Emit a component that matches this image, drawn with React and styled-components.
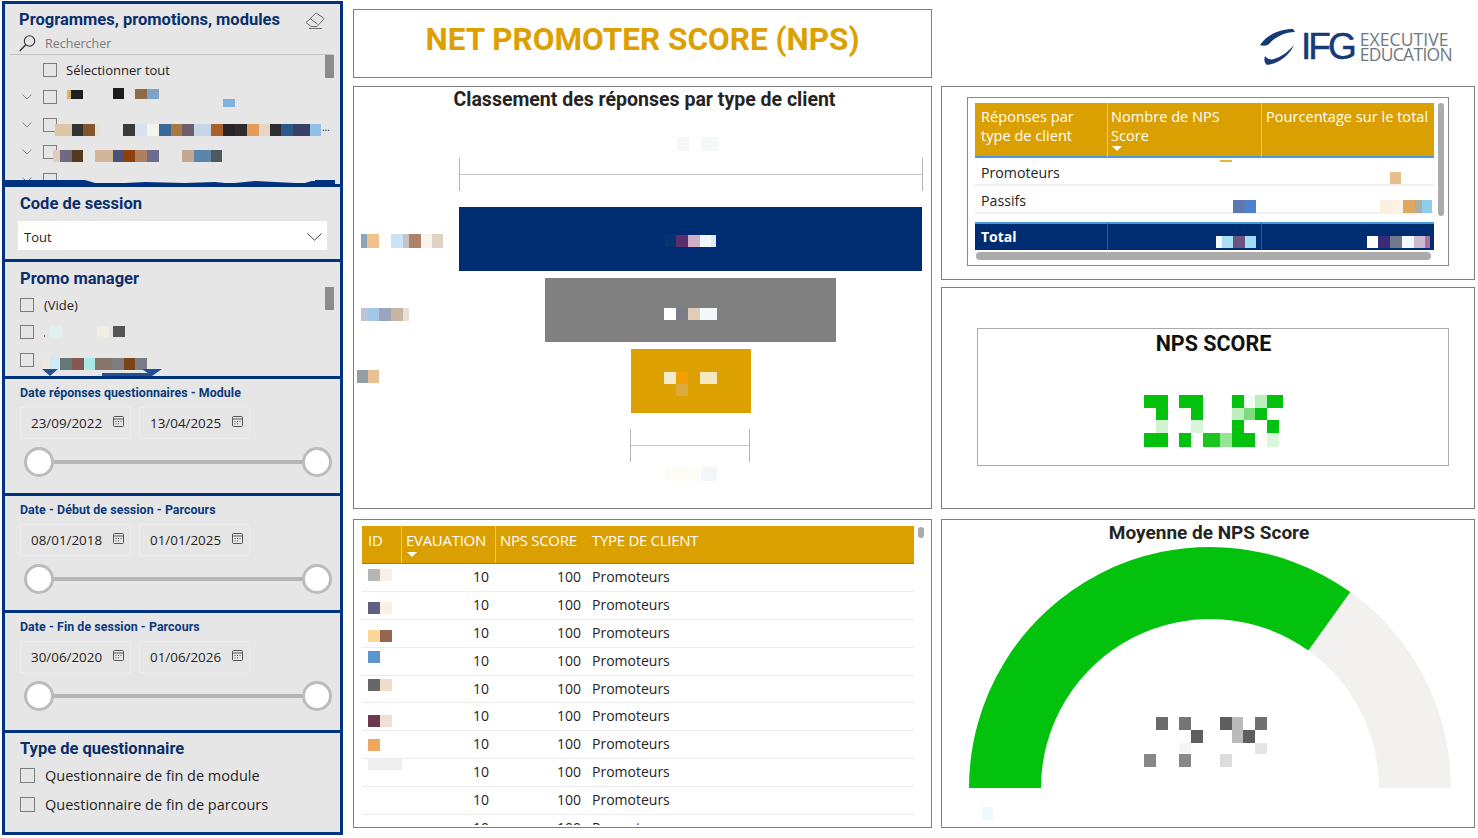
import React from "react";
import styled, { createGlobalStyle } from "styled-components";

const NAVY = "#002d72";
const GOLD = "#da9f00";
const BODY = `"Open Sans", "Noto Sans", sans-serif`;
const DIN = `Roboto, "Liberation Sans", sans-serif`;

const Global = createGlobalStyle`
    html, body { margin:0; padding:0; background:#fff; }
    body { width:1478px; height:838px; overflow:hidden; font-family:${BODY}; color:#252423; }
`;

const Page = styled.div`
    display:grid;
    grid-template-columns:344px 579px 534px;
    column-gap:9px;
    width:1478px;
    height:838px;
`;
const Sidebar = styled.aside`
    display:flex;
    flex-direction:column;
    padding:1px 1px 0 2px;
`;
const Panel = styled.section`
    position:relative;
    box-sizing:border-box;
    height:${p => p.$h}px;
    padding:${p => p.$pad || "0 0 0 15px"};
    background:#e6e6e6;
    border:3px solid #00337f;
    border-bottom:${p => p.$last ? "3px solid #00337f" : "0"};
    overflow:hidden;
`;
const SlicerTitle = styled.h3`
    margin:0;
    font:700 16.5px/22px ${DIN};
    color:#0a2f6b;
`;
const SmallTitle = styled.h4`
    margin:0;
    font:700 12.4px/16px ${DIN};
    letter-spacing:0.06px;
    color:#0a3a7c;
`;
const HeadRow = styled.div`
    display:flex;
    align-items:center;
    justify-content:space-between;
    height:31px;
    padding:1px 15px 0 0;
    box-sizing:border-box;
`;
const SearchRow = styled.div`
    display:flex;
    align-items:center;
    gap:9px;
    height:20px;
    margin-left:-9px;
    padding:0 0 2px 9px;
    width:323px;
    box-sizing:border-box;
    border-bottom:1px solid #c4c4c4;
    font-size:12.5px;
    color:#7a7a7a;
`;
const List = styled.div`
    display:flex;
    flex-direction:column;
    height:${p => p.$h}px;
    overflow:hidden;
    margin-top:${p => p.$mt || 0}px;
`;
const Item = styled.div`
    display:flex;
    align-items:center;
    flex:none;
    height:${p => p.$h || 27.5}px;
    font-size:${p => p.$fs || 13}px;
    color:#252423;
    gap:${p => p.$gap ?? 9}px;
`;
const Box = styled.span`
    flex:none;
    box-sizing:border-box;
    width:${p => p.$size || 14}px;
    height:${p => p.$size || 14}px;
    margin-left:${p => p.$ml || 0}px;
    border:1px solid #7d7d7d;
`;
const Caret = styled.svg`
    flex:none;
    width:10px;
    height:6px;
    margin-left:3px;
    margin-right:11px;
    fill:none;
    stroke:#8a8a8a;
    stroke-width:1;
`;
const Blot = styled.span`
    display:block;
    margin-left:${p => p.$ml || 0}px;
    margin-top:${p => p.$mt || 0}px;
`;
const Ellipsis = styled.span`
    font-size:10px;
    margin-top:4px;
    margin-left:1px;
`;
const ScrollThumb = styled.span`
    position:absolute;
    top:${p => p.$top}px;
    right:${p => p.$right}px;
    width:9px;
    height:23px;
    background:#8c8c8c;
`;
const Dropdown = styled.div`
    display:flex;
    align-items:center;
    justify-content:space-between;
    box-sizing:border-box;
    width:309px;
    height:29px;
    margin:6px 0 0 -2px;
    padding:2px 5px 0 6px;
    background:#fff;
    font-size:13px;
`;
const DateRow = styled.div`
    display:flex;
    gap:8px;
    margin-top:6px;
`;
const DateBox = styled.div`
    display:flex;
    align-items:center;
    box-sizing:border-box;
    width:111px;
    height:32px;
    padding:0 6px 0 10px;
    justify-content:space-between;
    border:1px solid #ececec;
    font-size:13.4px;
    color:#252423;
`;
const Slider = styled.div`
    position:relative;
    display:flex;
    justify-content:space-between;
    align-items:center;
    width:308px;
    height:30px;
    margin:8px 0 0 4px;
    &::before {
        content:"";
        position:absolute;
        left:10px;
        right:10px;
        top:13px;
        height:4px;
        background:#b5b5b5;
    }
`;
const Thumb = styled.span`
    position:relative;
    box-sizing:border-box;
    width:30px;
    height:30px;
    border-radius:50%;
    background:#fff;
    border:3px solid #bcbcbc;
`;
const Column = styled.div`
    display:flex;
    flex-direction:column;
    padding-top:${p => p.$top || 0}px;
`;
const Card = styled.div`
    position:relative;
    box-sizing:border-box;
    flex:none;
    height:${p => p.$h}px;
    margin-bottom:${p => p.$mb || 0}px;
    border:1px solid #7f7f7f;
    background:#fff;
`;
const BigTitle = styled.h1`
    margin:0;
    height:100%;
    box-sizing:border-box;
    padding-bottom:8px;
    display:flex;
    align-items:center;
    justify-content:center;
    font:700 31.5px ${DIN};
    color:#dca000;
`;
const CardTitle = styled.h2`
    margin:${p => p.$mt || 0}px 0 0;
    text-align:center;
    font:700 ${p => p.$fs || 19}px/${p => p.$lh || 24}px ${DIN};
    color:${p => p.$c || "#252423"};
    padding-left:${p => p.$pl || 0}px;
`;
const FunnelWrap = styled.div`
    display:flex;
    flex-direction:column;
    padding-top:${p => p.$top || 0}px;
`;
const FaintRow = styled.div`
    margin-left:${p => p.$ml}px;
    margin-top:${p => p.$mt || 0}px;
    height:${p => p.$h}px;
`;
const Bracket = styled.div`
    box-sizing:border-box;
    width:${p => p.$w}px;
    height:33px;
    margin-left:${p => p.$ml}px;
    margin-top:${p => p.$mt || 0}px;
    margin-bottom:${p => p.$mb || 0}px;
    border:solid #b4b4b4;
    border-width:0 1px;
    background:linear-gradient(#c6c6c6,#c6c6c6) center / 100% 1px no-repeat;
`;
const FunnelRow = styled.div`
    display:flex;
    height:64px;
    margin-bottom:7px;
`;
const FunnelLabel = styled.div`
    flex:none;
    width:105px;
    padding:${p => p.$top}px 0 0 ${p => p.$left}px;
    box-sizing:border-box;
`;
const Track = styled.div`
    display:flex;
    justify-content:center;
    width:463px;
`;
const Bar = styled.div`
    display:flex;
    align-items:center;
    justify-content:center;
    box-sizing:border-box;
    padding-top:${p => p.$pt || 0}px;
    width:${p => p.$w}px;
    background:${p => p.$c};
`;
const Logo = styled.div`
    display:flex;
    align-items:center;
    justify-content:flex-end;
    height:86px;
    padding:8px 23px 0 0;
    box-sizing:border-box;
`;
const LogoName = styled.span`
    margin:0 6px 0 5px;
    font:400 37px/38px "Liberation Sans", sans-serif;
    letter-spacing:-3px;
    -webkit-text-stroke:0.5px #163a75;
    color:#163a75;
`;
const LogoTag = styled.span`
    display:flex;
    flex-direction:column;
    font:400 17.5px/15px ${BODY};
    color:#6f7880;
`;
const LogoLine = styled.span`
    letter-spacing:${p => p.$ls}px;
`;
const InnerCard = styled.div`
    position:relative;
    box-sizing:border-box;
    width:${p => p.$w}px;
    height:${p => p.$h}px;
    margin:${p => p.$m};
    border:1px solid ${p => p.$bc || "#8a8a8a"};
    padding:${p => p.$pad || 0};
`;
const SummaryGrid = styled.div`
    position:relative;
    display:grid;
    grid-template-columns:132px 154px 173px;
    grid-template-rows:55px 28px 28px 8px 28px;
    width:459px;
`;
const HeadCell = styled.div`
    position:relative;
    box-sizing:border-box;
    padding:4px ${p => p.$pr ?? 4}px 0 ${p => p.$pl || 6}px;
    background:${GOLD};
    color:#fff;
    font-size:14.6px;
    line-height:19px;
    border-left:${p => p.$line ? "1px solid #edc766" : "0"};
    border-bottom:2px solid #4a98d8;
`;
const SortMark = styled.span`
    position:absolute;
    left:${p => p.$l}px;
    bottom:${p => p.$b}px;
    width:0;
    height:0;
    border:solid transparent;
    border-width:5px 5px 0;
    border-top-color:#fff;
`;
const BodyCell = styled.div`
    display:flex;
    align-items:center;
    box-sizing:border-box;
    justify-content:${p => p.$end ? "flex-end" : "flex-start"};
    padding:${p => p.$pt || 0}px ${p => p.$pr || 0}px 0 ${p => p.$pl || 0}px;
    font-size:14.2px;
    border-bottom:2px solid #f0f0f0;
`;
const TotalCell = styled.div`
    display:flex;
    align-items:center;
    box-sizing:border-box;
    justify-content:${p => p.$end ? "flex-end" : "flex-start"};
    padding:${p => p.$pt || 0}px ${p => p.$pr || 0}px ${p => p.$pb || 0}px ${p => p.$pl || 0}px;
    background:${NAVY};
    color:#fff;
    font-size:14px;
    font-weight:700;
    border-top:2px solid #4a98d8;
    border-left:${p => p.$line ? "1px solid #34588f" : "0"};
`;
const Spacer = styled.div`
    grid-column:1 / -1;
`;
const GoldTick = styled.span`
    position:absolute;
    left:245px;
    top:57px;
    width:12px;
    height:2px;
    background:#e5b53a;
`;
const VScroll = styled.span`
    position:absolute;
    top:5px;
    left:470px;
    width:6px;
    height:113px;
    border-radius:3px;
    background:#ababab;
`;
const HScroll = styled.span`
    display:block;
    width:455px;
    height:8px;
    margin:2px 0 0 1px;
    border-radius:4px;
    background:#ababab;
`;
const ScoreValue = styled.div`
    display:flex;
    justify-content:center;
    margin:37px 0 0 2px;
`;
const GaugeSvg = styled.svg`
    display:block;
    margin:1px 0 0 0;
`;
const ClientTable = styled.div`
    margin:6px 0 0 8px;
    width:552px;
`;
const ClientHead = styled.div`
    display:grid;
    grid-template-columns:39px 94px 97px 1fr;
    height:37px;
    background:${GOLD};
    border-bottom:1px solid #3b8fd0;
    color:#fff;
    font-size:15px;
    letter-spacing:-0.3px;
    line-height:29px;
`;
const ClientHeadCell = styled.div`
    position:relative;
    padding-left:${p => p.$pl ?? 4}px;
    border-left:${p => p.$line ? "1px solid #edc766" : "0"};
`;
const ClientRows = styled.div`
    height:261px;
    overflow:hidden;
`;
const ClientRow = styled.div`
    display:grid;
    grid-template-columns:39px 88px 92px 1fr;
    box-sizing:border-box;
    height:27.9px;
    padding-bottom:2px;
    align-items:center;
    border-bottom:1px solid #ececec;
    font-size:14px;
`;
const IdCell = styled.div`
    padding-left:6px;
`;
const Num = styled.div`
    text-align:right;
`;
const ClientType = styled.div`
    padding-left:11px;
`;
const SmallScroll = styled.span`
    position:absolute;
    top:7px;
    left:564px;
    width:6px;
    height:11px;
    border-radius:3px;
    background:#ababab;
`;

// flou de confidentialité : blocs de couleur
const Pixels = ({ w, h, cells }) => (
    <svg width={w} height={h} viewBox={`0 0 ${w} ${h}`} style={{ display: "block", flex: "none", overflow: "visible" }}>
        {cells.map(([x, y, cw, ch, c], i) => <rect key={i} x={x} y={y} width={cw} height={ch} fill={c} />)}
    </svg>
);
const strip = (segs, h = 12, y = 0) => {
    let x = 0;
    const cells = [];
    segs.forEach(([sw, c]) => {
        if (c) cells.push([x, y, sw, h, c]);
        x += sw;
    });
    return cells;
};
const stripW = segs => segs.reduce((a, s) => a + s[0], 0);
const Strip = ({ segs, h = 12 }) => <Pixels w={stripW(segs)} h={h} cells={strip(segs, h)} />;

const Chevron = () => (
    <Caret viewBox="0 0 10 6"><path d="M.5.5 5 5 9.5.5" /></Caret>
);
const Eraser = () => (
    <svg width="20" height="17" viewBox="0 0 20 17" fill="none" stroke="#6e6e6e" strokeWidth="1">
        <path d="M1 10.5 10.5 1.5a1 1 0 0 1 1.4 0L18.5 6a1 1 0 0 1 0 1.4L12 14.5H6z" />
        <path d="M5 6.5 12.5 12M4 16.5h13" />
    </svg>
);
const SearchIcon = () => (
    <svg width="17" height="17" viewBox="0 0 17 17" fill="none" stroke="#333" strokeWidth="1.1">
        <circle cx="10.5" cy="6" r="5.2" />
        <path d="M6.8 9.8 .7 16" strokeWidth="1.4" />
    </svg>
);
const Calendar = () => (
    <svg width="11" height="11" viewBox="0 0 11 11" fill="none" stroke="#555" style={{ marginTop: -3 }}>
        <rect x=".5" y=".5" width="10" height="10" rx="1" />
        <path d="M.5 3h10" />
        <path d="M2.5 5.5h1M5 5.5h1M7.5 5.5h1M2.5 7.8h1M5 7.8h1" strokeWidth="1" />
    </svg>
);
const DropChevron = () => (
    <svg width="15" height="8" viewBox="0 0 15 8" fill="none" stroke="#444"><path d="M.5.5 7.5 7.2 14.5.5" /></svg>
);
const Swoosh = () => (
    <svg width="36" height="38" viewBox="0 0 36 38" fill="#163a75">
        <path d="M0 17C6 8 18 1 33 1L35 4C25 4 15 9 9 16 7 18 3 18 0 17Z" />
        <path d="M34 17C29 28 18 36 7 37 4 35 4 31 5 28 7 31 11 32 14 31 21 29 28 24 34 17Z" />
    </svg>
);

const row3 = [[17, "#dcc8a8"], [11, "#333333"], [12, "#84562a"], [5, "#e9e0d4"], [23, null], [12, "#3a3a3a"], [12, "#d6e1ee"], [12, "#f4f4ef"], [12, "#3a6a9c"], [11, "#a9783f"], [12, "#6e5e6a"], [17, "#c5d6e8"], [12, "#a9602a"], [12, "#2c2328"], [12, "#2e2c2e"], [12, "#e49d58"], [11, "#e6d5c2"], [11, "#2e2e30"], [12, "#2a5a8c"], [17, "#3a3f66"], [11, "#90bfe8"]];
const row4 = [[7, "#e0cdb8"], [12, "#6f6a80"], [11, "#54391f"], [12, null], [18, "#d3b59a"], [11, "#4a5078"], [11, "#8e3f0a"], [12, "#ab8160"], [12, "#6d6b8f"], [23, null], [12, "#c3a78f"], [17, "#5c85ad"], [11, "#4c5a5e"]];

const ClientIds = [
    [[12, "#b5b5b5"], [12, "#f8efe6"]],
    [[12, "#5f5f85"], [12, "#fdf0e3"]],
    [[12, "#fcd79a"], [12, "#96654f"]],
    [[12, "#5b95cc"]],
    [[12, "#666666"], [12, "#f0dcc8"]],
    [[12, "#6b3a4f"], [12, "#eee0d5"]],
    [[12, "#eda860"]],
    [[34, "#eeeeee"]],
    [],
    [],
];
const IdOffset = [-1, 4, 4, -3, -3, 5, 1, -8, 0, 0];

const green = "#02c20e";
const ScoreCells = [
    [0, 0, 24, 13, green], [35, 0, 24, 13, green], [88, 0, 12, 13, green], [100, 0, 11, 13, "#f4fdf4"], [111, 0, 12, 13, "#bdeebd"], [123, 0, 16, 13, green],
    [12, 13, 12, 12, green], [35, 13, 11, 12, "#f8fef8"], [47, 13, 12, 12, green], [88, 13, 12, 12, "#bdeebd"], [100, 13, 11, 12, "#7cdc7c"], [111, 13, 12, 12, green],
    [12, 25, 12, 13, "#d2f3d2"], [47, 25, 12, 13, "#d9f5d9"], [88, 25, 12, 13, green], [123, 25, 12, 13, green],
    [0, 38, 24, 14, green], [35, 38, 12, 14, green], [59, 38, 17, 14, "#1cc41c"], [76, 38, 12, 14, "#94e494"], [88, 38, 23, 14, green], [123, 38, 12, 14, "#dcf6dc"],
];
const GaugeCells = [
    [12, 0, 12, 13, "#6b6b6b"], [35, 0, 12, 13, "#757575"], [47, 13, 12, 13, "#5e5e5e"], [76, 0, 12, 13, "#5e5e5e"], [88, 0, 11, 26, "#bbbbbb"], [99, 13, 12, 13, "#5e5e5e"], [111, 0, 12, 13, "#707070"],
    [111, 26, 12, 11, "#e5e5e5"], [35, 26, 12, 11, "#f6f6f6"], [0, 37, 12, 13, "#888888"], [35, 37, 12, 13, "#888888"], [76, 37, 12, 13, "#dddddd"],
];

// arc de jauge, angle en degrés depuis la droite
const polar = (cx, cy, r, a) => [cx + r * Math.cos(a * Math.PI / 180), cy - r * Math.sin(a * Math.PI / 180)];
const arcPath = (cx, cy, R, r, from, to) => {
    const [x1, y1] = polar(cx, cy, R, from);
    const [x2, y2] = polar(cx, cy, R, to);
    const [x3, y3] = polar(cx, cy, r, to);
    const [x4, y4] = polar(cx, cy, r, from);
    return `M${x1} ${y1}A${R} ${R} 0 0 1 ${x2} ${y2}L${x3} ${y3}A${r} ${r} 0 0 0 ${x4} ${y4}Z`;
};

const DateSlicer = ({ title, from, to, h }) => (
    <Panel $h={h} $pad="6px 0 0 15px">
        <SmallTitle>{title}</SmallTitle>
        <DateRow>
            <DateBox>{from}<Calendar /></DateBox>
            <DateBox>{to}<Calendar /></DateBox>
        </DateRow>
        <Slider><Thumb /><Thumb /></Slider>
    </Panel>
);

export default function App() {
    return (
        <>
            <Global />
            <Page>
                <Sidebar>
                    <Panel $h={183} $pad="0 0 0 14px">
                        <HeadRow>
                            <SlicerTitle>Programmes, promotions, modules</SlicerTitle>
                            <Eraser />
                        </HeadRow>
                        <SearchRow><SearchIcon />Rechercher</SearchRow>
                        <ScrollThumb $top={51} $right={6} />
                        <List $h={131} $mt={1}>
                            <Item><Box $ml={24} />Sélectionner tout</Item>
                            <Item $gap={0}>
                                <Chevron /><Box />
                                <Blot $ml={10}>
                                    <Pixels w={170} h={18} cells={[[0, 2, 4, 9, "#d8b070"], [4, 2, 12, 9, "#1f1f1f"], [46, 0, 11, 11, "#1c1c1c"], [68, 1, 12, 10, "#8f6c47"], [80, 1, 12, 10, "#7ea3c8"], [156, 11, 12, 8, "#7db1de"]]} />
                                </Blot>
                            </Item>
                            <Item $gap={0}>
                                <Chevron /><Box />
                                <Blot $ml={-2} $mt={10}><Strip segs={row3} /></Blot>
                                <Ellipsis>…</Ellipsis>
                            </Item>
                            <Item $gap={0}>
                                <Chevron /><Box />
                                <Blot $ml={-4} $mt={8}><Strip segs={row4} /></Blot>
                            </Item>
                            <Item $gap={0}><Chevron /><Box /></Item>
                        </List>
                        <svg width="330" height="5" viewBox="0 0 330 5" style={{ position: "absolute", left: 0, bottom: 0 }}>
                            <path d="M0 1h80l10 3h30l20-1 40 1 30-1 10 1h10l20-2 40 2h10l10-3h30v4H0z" fill="#00337f" />
                            <path d="M80 0h10l8 3h28l14-1h40l30 0h20l20 0h30l30 0v-2z" fill="#e6e6e6" />
                        </svg>
                    </Panel>
                    <Panel $h={75} $pad="6px 0 0 15px">
                        <SlicerTitle>Code de session</SlicerTitle>
                        <Dropdown>Tout<DropChevron /></Dropdown>
                    </Panel>
                    <Panel $h={117} $pad="6px 0 0 15px">
                        <SlicerTitle>Promo manager</SlicerTitle>
                        <ScrollThumb $top={25} $right={6} />
                        <List $h={84} $mt={1}>
                            <Item $gap={10}><Box />(Vide)</Item>
                            <Item $gap={0}>
                                <Box />
                                <Blot $ml={10}>
                                    <Pixels w={85} h={14} cells={[[0, 10, 1, 2, "#a07050"], [6, 0, 12, 13, "#dff0f0"], [53, 1, 12, 11, "#f0eee2"], [69, 1, 12, 11, "#555555"]]} />
                                </Blot>
                            </Item>
                            <Item $gap={0}>
                                <Box />
                                <Blot $ml={8} $mt={8}>
                                    <Strip segs={[[8, "#f0e8d8"], [10, "#cfeaf0"], [12, "#64787a"], [12, "#84584e"], [11, "#a8e8e8"], [17, "#857467"], [12, "#7e7e7e"], [11, "#7c4414"], [12, "#767c88"]]} />
                                </Blot>
                            </Item>
                        </List>
                        <svg width="125" height="7" viewBox="0 0 125 7" style={{ position: "absolute", left: 37, bottom: 0 }}>
                            <path d="M0 0h16l-8 7zM100 0h20l-10 7z" fill="#234f8e" />
                            <path d="M60 4h50v3H60z" fill="#234f8e" />
                        </svg>
                    </Panel>
                    <DateSlicer h={117} title="Date réponses questionnaires - Module" from="23/09/2022" to="13/04/2025" />
                    <DateSlicer h={117} title="Date - Début de session - Parcours" from="08/01/2018" to="01/01/2025" />
                    <DateSlicer h={120} title="Date - Fin de session - Parcours" from="30/06/2020" to="01/06/2026" />
                    <Panel $h={105} $last $pad="5px 0 0 15px">
                        <SlicerTitle>Type de questionnaire</SlicerTitle>
                        <List $h={60} $mt={1}>
                            <Item $h={29} $fs={14.5} $gap={10}><Box $size={15} />Questionnaire de fin de module</Item>
                            <Item $h={29} $fs={14.5} $gap={10}><Box $size={15} />Questionnaire de fin de parcours</Item>
                        </List>
                    </Panel>
                </Sidebar>

                <Column $top={9}>
                    <Card $h={69} $mb={8}><BigTitle>NET PROMOTER SCORE (NPS)</BigTitle></Card>
                    <Card $h={423} $mb={10}>
                        <CardTitle $fs={19.5} $pl={4} $mt={1}>Classement des réponses par type de client</CardTitle>
                        <FunnelWrap $top={25}>
                            <FaintRow $ml={323} $h={21}><Pixels w={44} h={14} cells={[[0, 0, 12, 14, "#f9f7f5"], [24, 0, 18, 14, "#f5f9f9"]]} /></FaintRow>
                            <Bracket $w={464} $ml={105} $mb={16} />
                            <FunnelRow>
                                <FunnelLabel $top={27} $left={7}><Strip segs={[[6, "#8fa3b3"], [12, "#f3c18c"], [12, null], [12, "#cbe3f5"], [6, "#c4c4c4"], [12, "#ad8268"], [11, "#fbf3ed"], [11, "#ded3c3"]]} h={14} /></FunnelLabel>
                                <Track><Bar $w={463} $c="#002d72" $pt={4}><Strip segs={[[11, "#06326f"], [12, "#5a2d6e"], [12, "#d0b0c8"], [11, "#eef8fb"], [5, "#dfeaf2"]]} /></Bar></Track>
                            </FunnelRow>
                            <FunnelRow>
                                <FunnelLabel $top={30} $left={7}><Strip segs={[[7, "#b9c6d3"], [11, "#a3c5e6"], [12, "#9aa4bb"], [12, "#c8b5a1"], [6, "#e8dfd6"]]} h={13} /></FunnelLabel>
                                <Track><Bar $w={291} $c="#808080" $pt={8}><Strip segs={[[12, "#ffffff"], [12, "#7d7d8a"], [12, "#decdb8"], [17, "#f3f8fb"]]} /></Bar></Track>
                            </FunnelRow>
                            <FunnelRow>
                                <FunnelLabel $top={21} $left={3}><Strip segs={[[11, "#939ea5"], [11, "#eabf94"]]} h={13} /></FunnelLabel>
                                <Track>
                                    <Bar $w={120} $c="#dca000" $pt={6}>
                                        <Pixels w={53} h={24} cells={[[0, 0, 12, 12, "#f4ebcc"], [12, 0, 12, 12, "#ef9f00"], [36, 0, 17, 12, "#f7e8bf"], [12, 12, 12, 12, "#dcab3e"]]} />
                                    </Bar>
                                </Track>
                            </FunnelRow>
                            <Bracket $w={120} $ml={276} $mt={9} />
                            <FaintRow $ml={311} $h={20} $mt={5}><Pixels w={52} h={14} cells={[[0, 0, 35, 14, "#fdfcf5"], [36, 0, 16, 14, "#f3f7fb"]]} /></FaintRow>
                        </FunnelWrap>
                    </Card>
                    <Card $h={309}>
                        <ClientTable>
                            <ClientHead>
                                <ClientHeadCell $pl={6}>ID</ClientHeadCell>
                                <ClientHeadCell $line>EVAUATION<SortMark $l={5} $b={6} /></ClientHeadCell>
                                <ClientHeadCell $line>NPS SCORE</ClientHeadCell>
                                <ClientHeadCell $pl={0}>TYPE DE CLIENT</ClientHeadCell>
                            </ClientHead>
                            <ClientRows>
                                {ClientIds.map((segs, i) => (
                                    <ClientRow key={i}>
                                        <IdCell style={{ transform: `translateY(${IdOffset[i]}px)` }}><Strip segs={segs} /></IdCell>
                                        <Num>10</Num>
                                        <Num>100</Num>
                                        <ClientType>Promoteurs</ClientType>
                                    </ClientRow>
                                ))}
                            </ClientRows>
                        </ClientTable>
                        <SmallScroll />
                    </Card>
                </Column>

                <Column>
                    <Logo>
                        <Swoosh />
                        <LogoName>IFG</LogoName>
                        <LogoTag><LogoLine $ls={0.1}>EXECUTIVE</LogoLine><LogoLine $ls={-0.7}>EDUCATION</LogoLine></LogoTag>
                    </Logo>
                    <Card $h={194} $mb={7}>
                        <InnerCard $w={482} $h={169} $m="10px 0 0 25px" $pad="5px 0 0 7px">
                            <SummaryGrid>
                                <HeadCell $pr={30}>Réponses par type de client</HeadCell>
                                <HeadCell $line $pl={3} $pr={30}>Nombre de NPS Score<SortMark $l={4} $b={5} /></HeadCell>
                                <HeadCell $line $pl={4} $pr={0}>Pourcentage sur le total</HeadCell>
                                <BodyCell $pl={6} $pt={2}>Promoteurs</BodyCell>
                                <BodyCell />
                                <BodyCell $end $pr={33} $pt={14}><Strip segs={[[11, "#e8bd8c"]]} /></BodyCell>
                                <BodyCell $pl={6} $pt={2}>Passifs</BodyCell>
                                <BodyCell $end $pr={5} $pt={14}><Strip segs={[[12, "#5b78b0"], [11, "#4f82cc"]]} h={13} /></BodyCell>
                                <BodyCell $end $pr={2} $pt={14}><Strip segs={[[12, "#fbefe0"], [11, "#fdf3e4"], [12, "#dfa760"], [7, "#a7b1a3"], [10, "#90cde9"]]} h={13} /></BodyCell>
                                <Spacer />
                                <TotalCell $pl={6} $pb={2}>Total</TotalCell>
                                <TotalCell $line $end $pr={5} $pt={10}><Strip segs={[[6, "#f4f8fb"], [11, "#a9dff5"], [12, "#6b5480"], [11, "#a0dcf6"]]} /></TotalCell>
                                <TotalCell $line $end $pr={4} $pt={10}><Strip segs={[[11, "#ffffff"], [12, "#3b2a78"], [12, "#6e7a8c"], [12, "#f3f8fb"], [11, "#cdb9d0"], [5, "#a8709a"]]} /></TotalCell>
                                <GoldTick />
                            </SummaryGrid>
                            <HScroll />
                            <VScroll />
                        </InnerCard>
                    </Card>
                    <Card $h={222} $mb={10}>
                        <InnerCard $w={472} $h={138} $m="40px 0 0 35px" $bc="#ababab">
                            <CardTitle $fs={21.5} $c="#111" $pl={1} $lh={29}>NPS SCORE</CardTitle>
                            <ScoreValue><Pixels w={140} h={52} cells={ScoreCells} /></ScoreValue>
                        </InnerCard>
                    </Card>
                    <Card $h={309}>
                        <CardTitle $pl={2} $mt={1}>Moyenne de NPS Score</CardTitle>
                        <GaugeSvg width="532" height="280" viewBox="0 0 532 280">
                            <path d={arcPath(268, 242, 241, 169, 54.4, 0)} fill="#f2f1f0" />
                            <path d={arcPath(268, 242, 241, 169, 180, 54.4)} fill={green} />
                            <g transform="translate(202 171)">
                                {GaugeCells.map(([x, y, w, h, c], i) => <rect key={i} x={x} y={y} width={w} height={h} fill={c} />)}
                            </g>
                            <rect x="40" y="261" width="11" height="13" fill="#eef8ff" />
                        </GaugeSvg>
                    </Card>
                </Column>
            </Page>
        </>
    );
}
